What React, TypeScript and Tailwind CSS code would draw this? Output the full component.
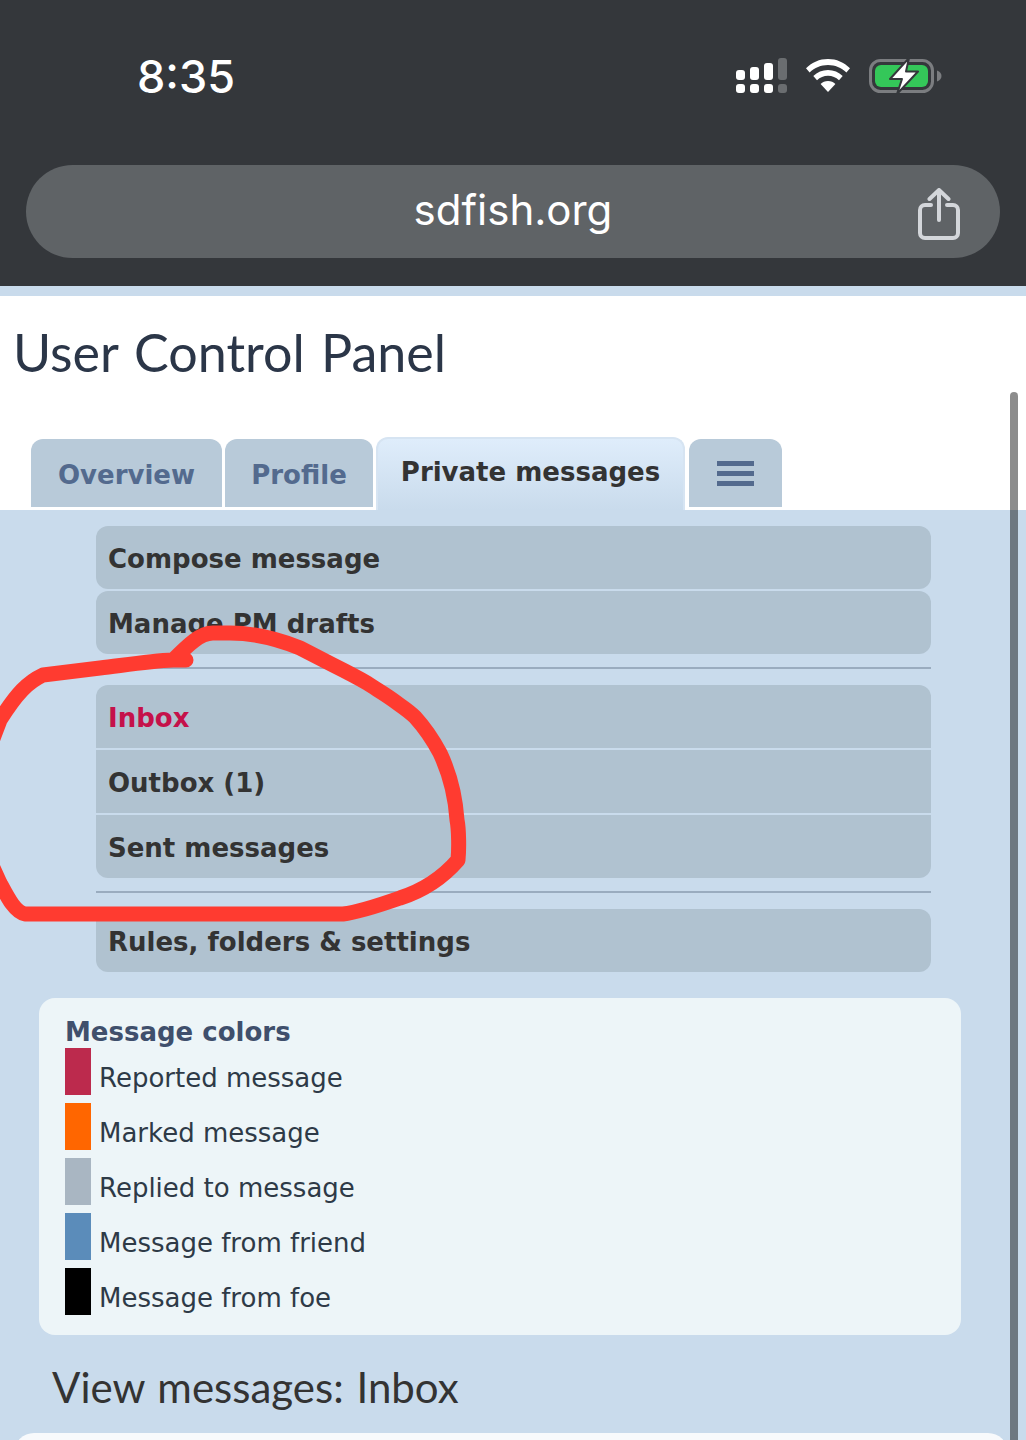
const body = "font-['DejaVu_Sans',sans-serif]";

const navTop = "rounded-t-[12px]";
const navBottom = "rounded-b-[12px]";

const NavItem = ({ label, className = "", textClass = "text-[#333]" }: { label: string; className?: string; textClass?: string }) => (
  <a className={`block h-[63px] bg-[#b0c2d0] pl-[12px] pt-[15px] text-[26px] leading-[36px] font-bold ${textClass} ${className}`}>
    {label}
  </a>
);

const legend = [
  { label: "Reported message", color: "bg-[#bc2a4d]" },
  { label: "Marked message", color: "bg-[#ff6600]" },
  { label: "Replied to message", color: "bg-[#a9b6c2]" },
  { label: "Message from friend", color: "bg-[#5b8cba]" },
  { label: "Message from foe", color: "bg-black" },
];

const StatusIcons = () => (
  <div className="flex items-center">
    <svg width="52" height="36" viewBox="0 0 52 36" fill="#fff" className="mt-[1px]">
      <rect x="0" y="12" width="9" height="10" rx="3" />
      <rect x="14" y="9" width="9" height="13" rx="3" />
      <rect x="28" y="5" width="9" height="17" rx="3" />
      <rect x="42" y="0" width="9" height="22" rx="3" fill="#6a6d70" />
      <rect x="0" y="26" width="9" height="9" rx="3" />
      <rect x="14" y="26" width="9" height="9" rx="3" />
      <rect x="28" y="26" width="9" height="9" rx="3" />
      <rect x="42" y="26" width="9" height="9" rx="3" fill="#6a6d70" />
    </svg>
    <svg width="44" height="33" viewBox="0 0 44 33" className="ml-[18px]" fill="#fff">
      <path d="M22 0C13.500 0 6 3.300 0 9.300l3.600 4.200C8.700 8.700 15 6 22 6s13.300 2.700 18.400 7.500L44 9.300C38 3.300 30.500 0 22 0z" />
      <path d="M22 11c-5.700 0-10.700 2.200-14.700 6l3.700 4.200c3-2.800 6.800-4.400 11-4.400s8 1.600 11 4.400l3.700-4.200C32.700 13.200 27.700 11 22 11z" />
      <path d="M22 22c-3 0-5.500 1.100-7.400 2.900L22 33l7.400-8.100C27.500 23.100 25 22 22 22z" />
    </svg>
    <svg width="73" height="36" viewBox="0 0 73 36" className="ml-[19px]">
      <rect x="1.500" y="2.500" width="62" height="31" rx="10" fill="none" stroke="#7b7d80" strokeWidth="3" />
      <rect x="6" y="7" width="53" height="22" rx="6" fill="#34c759" />
      <path d="M68 12.500c3 1 4.500 3 4.500 5.500s-1.500 4.500-4.500 5.500z" fill="#7b7d80" />
      <path d="M40 0 L21 21 L33 21 L28 36 L49 13.500 L37 13.500 Z" fill="#fff" stroke="#34373b" strokeWidth="2" strokeLinejoin="round" />
    </svg>
  </div>
);

const ShareIcon = () => (
  <svg width="42" height="52" viewBox="0 0 42 52" fill="none" stroke="#d3d6da" strokeWidth="4" strokeLinecap="round" strokeLinejoin="round">
    <path d="M13 17H7a5 5 0 0 0-5 5v23a5 5 0 0 0 5 5h28a5 5 0 0 0 5-5V22a5 5 0 0 0-5-5h-6" />
    <path d="M21 32V3" />
    <path d="M11.500 11 21 2l9.500 9" />
  </svg>
);

const Scribble = () => (
  <svg className="absolute left-0 top-[620px] pointer-events-none" width="480" height="310" viewBox="0 620 480 310" fill="none" stroke="#ff3b30" strokeWidth="15" strokeLinecap="round" strokeLinejoin="round">
    <path d="M186 660L173 660C150 661 125 665 100 668L43 675C28 682 17 693 0 720L-15 760L-15 850L0 883C8 898 15 912 25 914L343 914C360 912 380 905 400 898C425 890 445 875 458 860C459 850 459 830 457 820C455 790 448 770 440 753C432 738 425 728 415 717C408 710 401 706 393 700C385 694 376 689 367 683C355 676 345 671 333 665L300 648C280 640 255 633 230 633L213 633C200 633 188 645 173 660" />
  </svg>
);

export default function App() {
  return (
    <div className={`relative h-[1440px] w-[1026px] overflow-hidden bg-[#c9dbec] ${body}`}>
      <header className="h-[286px] bg-[#34373b] px-[26px]">
        <div className="flex h-[165px] items-start justify-between pl-[111px] pr-[58px]">
          <span className="mt-[47px] font-['Inter',sans-serif] text-[45px] leading-[60px] font-medium text-white">8:35</span>
          <div className="mt-[57px]">
            <StatusIcons />
          </div>
        </div>
        <div className="relative flex h-[93px] items-center justify-center rounded-full bg-[#5f6366] pb-[4px]">
          <span className="font-['Inter',sans-serif] text-[42px] text-white">sdfish.org</span>
          <div className="absolute right-[40px] top-[23px]">
            <ShareIcon />
          </div>
        </div>
      </header>

      <div className="mt-[10px] h-[214px] bg-white">
        <h1 className="pl-[13px] pt-[22px] font-['Lato',sans-serif] text-[52px] leading-[68px] [word-spacing:3px] text-[#2b3648]">User Control Panel</h1>
        <div className="mt-[53px] flex items-start pl-[31px]">
          <div className="flex h-[68px] w-[191px] justify-center rounded-t-[12px] bg-[#b8cad9] pt-[18px] text-[26px] leading-[36px] font-bold text-[#536a8e]">Overview</div>
          <div className="ml-[3px] flex h-[68px] w-[148px] justify-center rounded-t-[12px] bg-[#b8cad9] pt-[18px] text-[26px] leading-[36px] font-bold text-[#536a8e]">Profile</div>
          <div className="ml-[3px] -mt-[2px] flex h-[73px] w-[309px] justify-center rounded-t-[12px] border-x-[2px] border-t-[2px] border-[#d6e4f2] bg-gradient-to-b from-[#dfedfb] to-[#c9dbec] pt-[15px] text-[26px] leading-[36px] font-bold text-[#333]">Private messages</div>
          <div className="ml-[4px] flex h-[68px] w-[93px] flex-col items-center justify-center gap-[5px] rounded-t-[12px] bg-[#b8cad9]">
            <span className="h-[5px] w-[37px] bg-[#536a8e]"></span>
            <span className="h-[5px] w-[37px] bg-[#536a8e]"></span>
            <span className="h-[5px] w-[37px] bg-[#536a8e]"></span>
          </div>
        </div>
      </div>

      <main className="pt-[16px]">
        <nav className="ml-[96px] w-[835px]">
          <NavItem label="Compose message" className="rounded-[12px]" />
          <NavItem label="Manage PM drafts" className="mt-[2px] rounded-[12px]" />
          <hr className="mt-[13px] border-t-[2px] border-[#9aacbf]" />
          <div className="mt-[16px] flex flex-col gap-[2px]">
            <NavItem label="Inbox" className={navTop} textClass="text-[#c5114a]" />
            <NavItem label="Outbox (1)" />
            <NavItem label="Sent messages" className={navBottom} />
          </div>
          <hr className="mt-[13px] border-t-[2px] border-[#9aacbf]" />
          <NavItem label="Rules, folders & settings" className="mt-[16px] rounded-[12px]" />
        </nav>

        <section className="ml-[39px] mt-[26px] h-[337px] w-[922px] rounded-[16px] bg-[#edf5f8] pl-[26px] pt-[19px]">
          <h3 className="text-[26px] leading-[31px] font-bold text-[#3f4f6c]">Message colors</h3>
          <ul className="flex flex-col gap-[8px]">
            {legend.map((item) => (
              <li key={item.label} className="flex h-[47px] items-end gap-[8px]">
                <span className={`h-[47px] w-[26px] ${item.color}`}></span>
                <span className="text-[26px] leading-[36px] -mb-[1px] text-[#2e3a47]">{item.label}</span>
              </li>
            ))}
          </ul>
        </section>

        <h2 className="ml-[52px] mt-[23px] font-['Lato',sans-serif] text-[42px] leading-[58px] [word-spacing:2px] text-[#333]">View messages: Inbox</h2>
        <div className="ml-[14px] mt-[17px] h-[60px] w-[994px] rounded-[20px] bg-[#f8fafc]"></div>
      </main>

      <Scribble />
      <div className="absolute left-[1010px] top-[392px] h-[1060px] w-[8px] rounded-full bg-black/45"></div>
    </div>
  );
}
